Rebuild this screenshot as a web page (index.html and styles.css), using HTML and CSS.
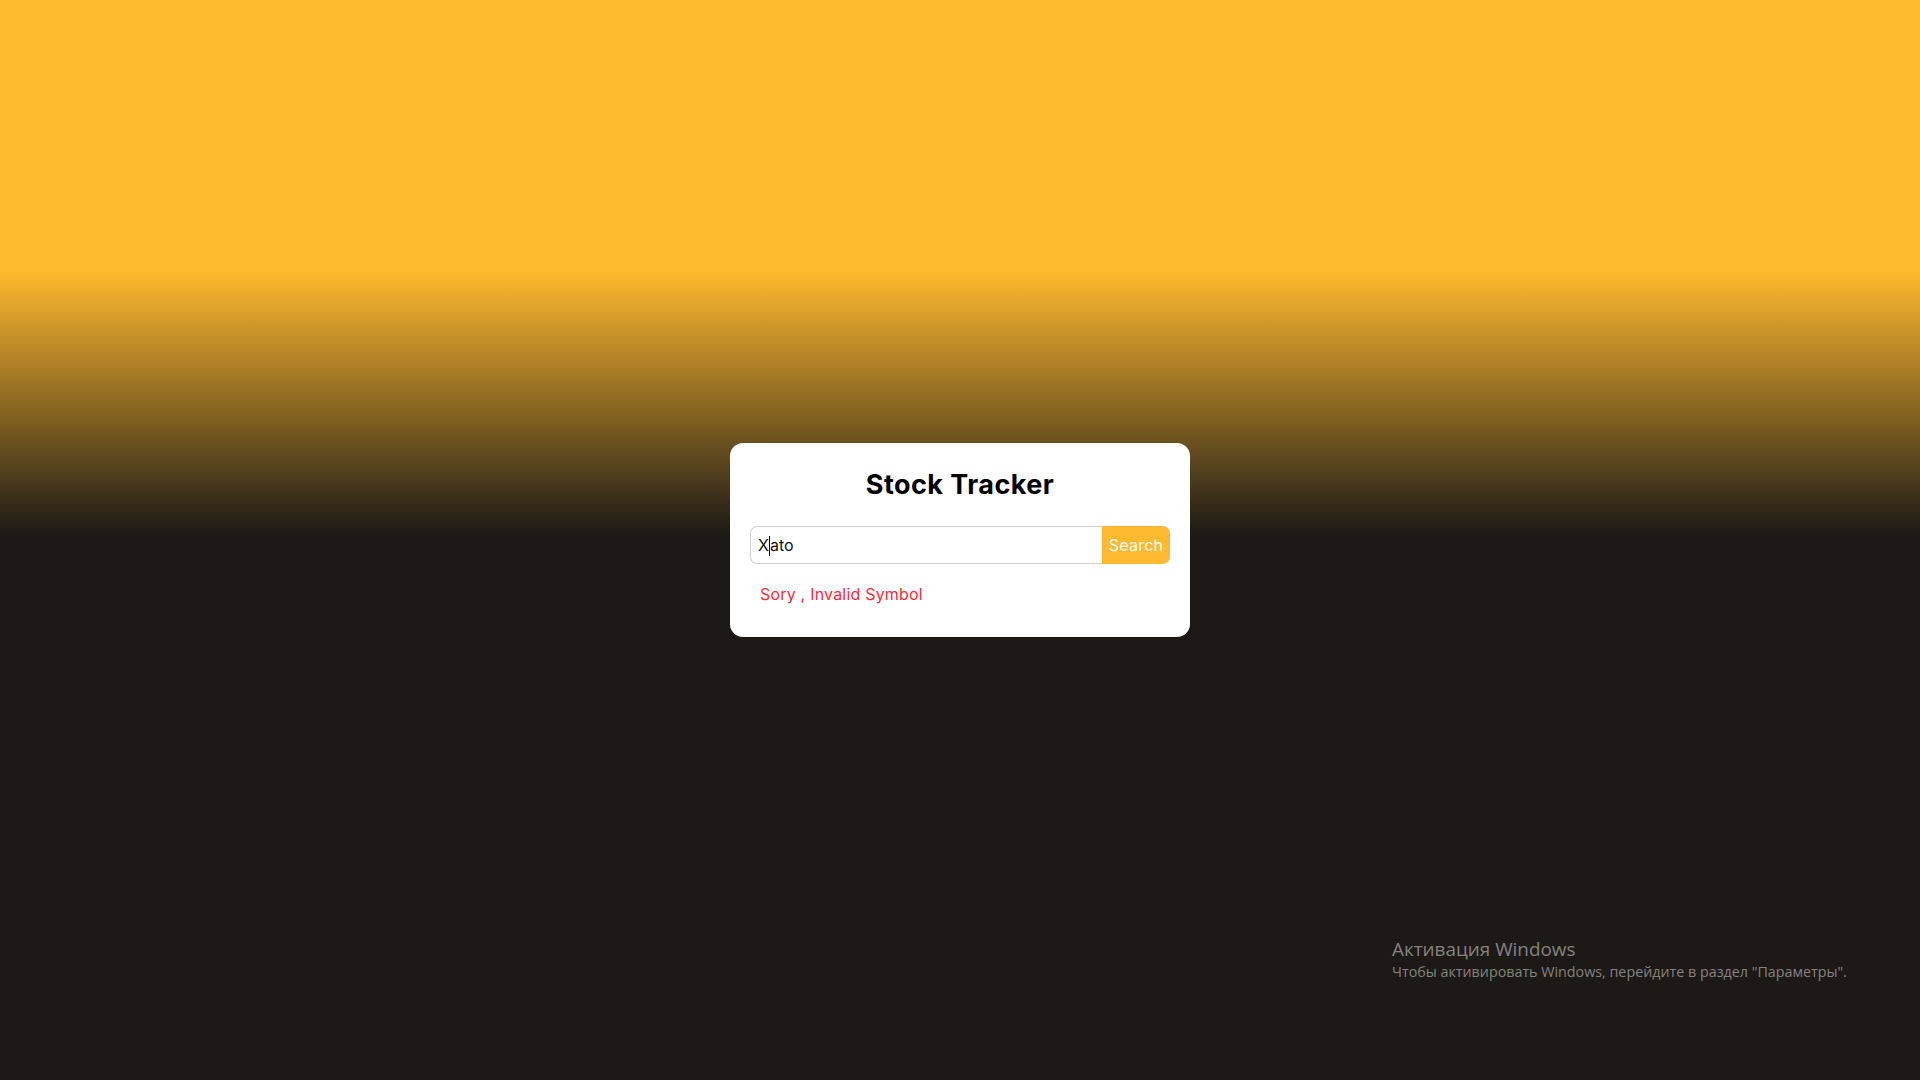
FILE: index.html
```html
<!DOCTYPE html>
<html lang="en">
<head>
<meta charset="utf-8">
<title>Stock Tracker</title>
<link rel="stylesheet" href="styles.css">
</head>
<body>
<main class="page">
  <section class="card">
    <h1 class="title">Stock Tracker</h1>
    <form class="search">
      <div class="field"><span class="val">X</span><span class="caret"></span><span class="val">ato</span></div>
      <button type="button" class="btn">Search</button>
    </form>
    <p class="error">Sory , Invalid Symbol</p>
  </section>
  <div class="watermark">
    <div class="wm-title">Активация Windows</div>
    <div class="wm-sub">Чтобы активировать Windows, перейдите в раздел "Параметры".</div>
  </div>
</main>
</body>
</html>
```

FILE: styles.css
```css
* { box-sizing: border-box; }
html, body { margin: 0; height: 100%; }
body {
  background: linear-gradient(to bottom, #ffb92e 0%, #ffb92e 25%, #1c1917 49.5%, #1c1917 100%);
  font-family: "Inter", "Open Sans", sans-serif;
}
.page {
  position: relative;
  height: 100vh;
  display: flex;
  align-items: center;
  justify-content: center;
}
.card {
  width: 460px;
  height: 194px;
  background: #fff;
  border-radius: 13px;
  padding: 25px 20px 0;
}
.title {
  margin: 0;
  text-align: center;
  font-size: 27px;
  line-height: 34px;
  font-weight: 700;
  color: #000;
  letter-spacing: 0.45px;
}
.search {
  display: flex;
  margin: 24px 0 0;
  height: 38px;
}
.field {
  flex: 1;
  display: flex;
  align-items: center;
  border: 1px solid #cfcfcf;
  border-right: none;
  border-radius: 7px 0 0 7px;
  padding-left: 7px;
  font-size: 16px;
  color: #111;
}
.caret {
  display: inline-block;
  width: 1px;
  height: 20px;
  background: #000;
  margin: 0 0 -2px 0;
}
.btn {
  width: 68px;
  border: none;
  background: #ffb92e;
  color: #fff;
  font-family: inherit;
  font-size: 16px;
  border-radius: 0 7px 7px 0;
  padding: 0;
  letter-spacing: 0.2px;
}
.error {
  margin: 18px 0 0 10px;
  color: #ff2a3a;
  font-size: 16px;
  line-height: 24px;
  letter-spacing: 0.2px;
}
.watermark {
  position: absolute;
  left: 1392px;
  top: 937px;
  color: #85827f;
  font-family: "Open Sans", "Noto Sans", sans-serif;
}
.wm-title {
  font-size: 18.9px;
  line-height: 25px;
}
.wm-sub {
  font-size: 14.3px;
  line-height: 20px;
}
```
